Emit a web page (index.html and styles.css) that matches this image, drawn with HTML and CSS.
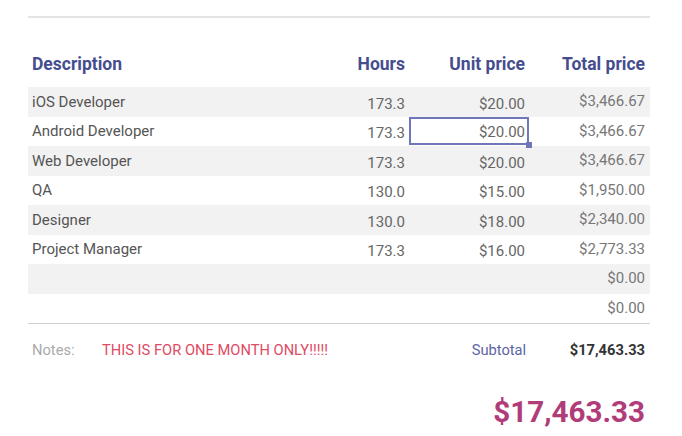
FILE: index.html
```html
<!DOCTYPE html>
<html>
<head>
<meta charset="utf-8">
<link rel="stylesheet" href="styles.css">
</head>
<body>
<div class="page">
  <div class="rule"></div>
  <div class="table">
    <div class="row head">
      <div class="c desc">Description</div>
      <div class="c num">Hours</div>
      <div class="c num">Unit price</div>
      <div class="c num tot">Total price</div>
    </div>
    <div class="row alt">
      <div class="c desc">iOS Developer</div>
      <div class="c num low">173.3</div>
      <div class="c num low">$20.00</div>
      <div class="c num tot">$3,466.67</div>
    </div>
    <div class="row">
      <div class="c desc">Android Developer</div>
      <div class="c num low">173.3</div>
      <div class="c num low sel">$20.00<span class="handle"></span></div>
      <div class="c num tot">$3,466.67</div>
    </div>
    <div class="row alt">
      <div class="c desc">Web Developer</div>
      <div class="c num low">173.3</div>
      <div class="c num low">$20.00</div>
      <div class="c num tot">$3,466.67</div>
    </div>
    <div class="row">
      <div class="c desc">QA</div>
      <div class="c num low">130.0</div>
      <div class="c num low">$15.00</div>
      <div class="c num tot">$1,950.00</div>
    </div>
    <div class="row alt">
      <div class="c desc">Designer</div>
      <div class="c num low">130.0</div>
      <div class="c num low">$18.00</div>
      <div class="c num tot">$2,340.00</div>
    </div>
    <div class="row">
      <div class="c desc">Project Manager</div>
      <div class="c num low">173.3</div>
      <div class="c num low">$16.00</div>
      <div class="c num tot">$2,773.33</div>
    </div>
    <div class="row alt">
      <div class="c desc"></div>
      <div class="c num low"></div>
      <div class="c num low"></div>
      <div class="c num tot">$0.00</div>
    </div>
    <div class="row last">
      <div class="c desc"></div>
      <div class="c num low"></div>
      <div class="c num low"></div>
      <div class="c num tot">$0.00</div>
    </div>
  </div>
  <div class="foot">
    <span class="notes-label">Notes:</span>
    <span class="notes">THIS IS FOR ONE MONTH ONLY!!!!!</span>
    <span class="sub-label">Subtotal</span>
    <span class="sub-value">$17,463.33</span>
  </div>
  <div class="grand">$17,463.33</div>
</div>
</body>
</html>
```
FILE: styles.css
```css
* { box-sizing: border-box; }
html, body { margin: 0; padding: 0; background: #fff; }
body { font-family: Roboto, "Noto Sans", sans-serif; color: #555; }
.page { width: 682px; height: 436px; padding: 16px 32px 0 28px; overflow: hidden; }
.rule { height: 2px; background: #e4e4e4; width: 622px; }
.table { width: 622px; margin-top: 32px; border-bottom: 1px solid #d0d0d0; }
.row {
  display: grid;
  grid-template-columns: 321px 60px 120px 121px;
  height: 29.5px;
  align-items: center;
  font-size: 15px;
}
.row.head { height: 37px; align-items: start; padding-top: 4px; font-size: 17.5px; font-weight: 700; color: #454d8f; }
.row.head .c { color: #454d8f; padding-top: 0; }
.row.alt { background: #f2f2f2; }
.c { white-space: nowrap; }
.desc { padding-left: 4px; color: #555; }
.num { text-align: right; padding-right: 4px; color: #666; }
.num.low { padding-top: 4px; }
.tot { padding-right: 5px; color: #777; padding-bottom: 1px; }
.sel {
  position: relative;
  height: 28px;
  border: 2px solid #6f77b8;
  padding-right: 2px;
  align-self: center;
}
.num.low.sel { padding-top: 2px; line-height: 22px; }
.handle {
  position: absolute;
  right: -5px;
  bottom: -5px;
  width: 6px;
  height: 6px;
  background: #6f77b8;
}
.foot {
  display: flex;
  align-items: center;
  width: 622px;
  height: 28px;
  margin-top: 12px;
  font-size: 14.7px;
}
.notes-label { padding-left: 4px; width: 74px; color: #aaa; }
.notes { color: #e04a63; flex: 1; }
.sub-label { color: #5c64a3; width: 98px; }
.sub-value { color: #333; font-weight: 700; padding-right: 5px; }
.grand {
  width: 622px;
  text-align: right;
  padding-right: 5px;
  margin-top: 31px;
  font-size: 29.6px;
  font-weight: 700;
  color: #b03c7a;
}
```
